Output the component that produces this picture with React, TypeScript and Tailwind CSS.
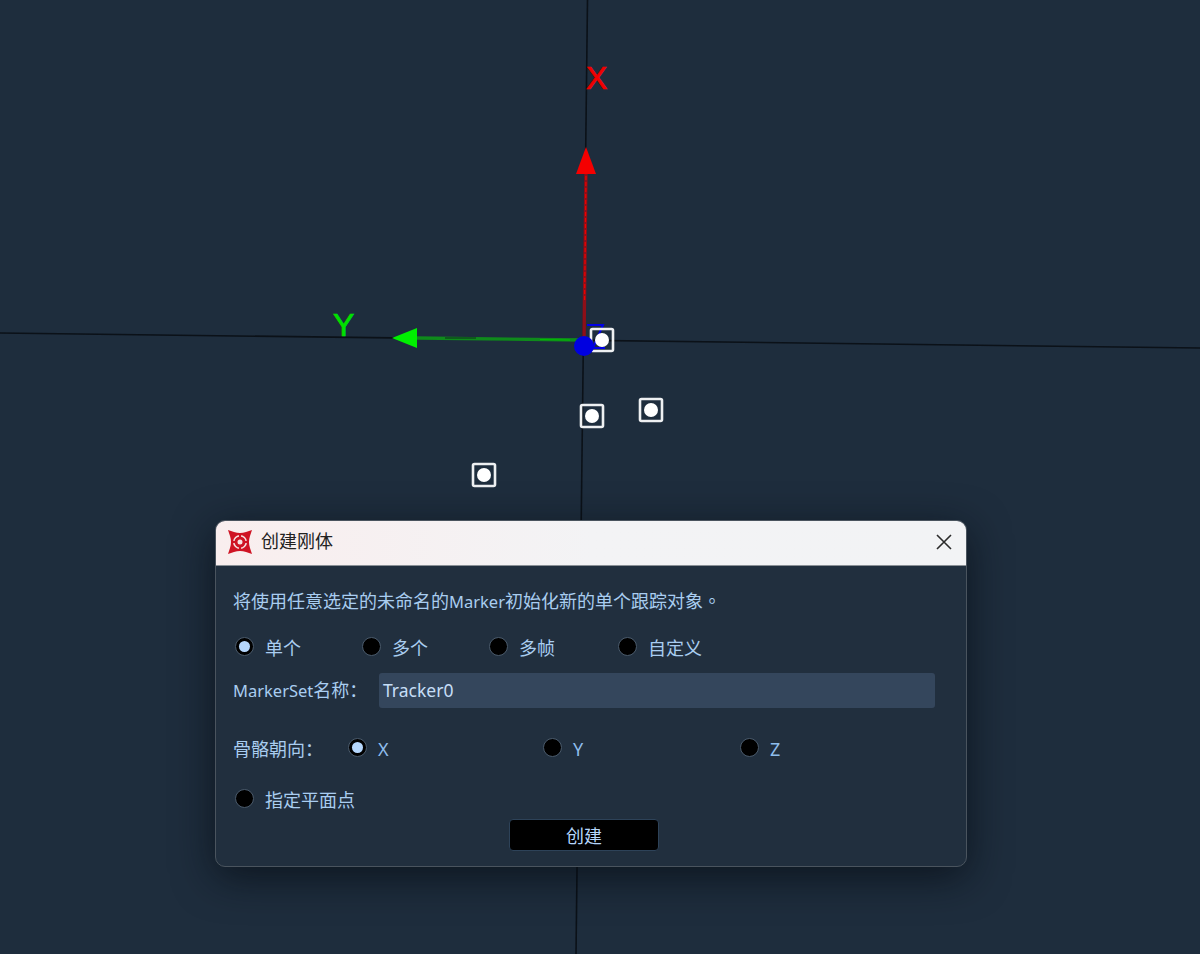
import React from 'react';

function Radio({ label, checked, labelClass }: { label: string; checked?: boolean; labelClass: string }) {
  return (
    <div className="flex items-center">
      <span className="flex h-[19px] w-[19px] shrink-0 items-center justify-center rounded-full border border-[#4a5a6b] bg-black">
        {checked && <span className="h-[11px] w-[11px] rounded-full bg-[#b5d6fb]" />}
      </span>
      <span className={`pt-[4px] text-[18px] leading-6 ${labelClass}`}>{label}</span>
    </div>
  );
}

function Marker({ x, y }: { x: number; y: number }) {
  return (
    <g>
      <rect x={x - 11} y={y - 11} width="22" height="22" rx="1.5" fill="none" stroke="#eef0f2" strokeWidth="2.6" />
      <circle cx={x} cy={y} r="7" fill="#fff" />
    </g>
  );
}

function Scene() {
  return (
    <svg className="absolute inset-0" width="1200" height="954" viewBox="0 0 1200 954">
      <line x1="587.5" y1="0" x2="576" y2="954" stroke="#0b1118" strokeWidth="1.6" />
      <line x1="0" y1="333" x2="1200" y2="348" stroke="#0b1118" strokeWidth="1.6" />
      <text x="586" y="89" fontSize="32" fill="#f00000" stroke="#f00000" strokeWidth="0.7" className="font-['Liberation_Sans',sans-serif]">X</text>
      <text x="333" y="336" fontSize="32" fill="#00e000" stroke="#00e000" strokeWidth="0.7" className="font-['Liberation_Sans',sans-serif]">Y</text>
      <line x1="584" y1="340" x2="586" y2="170" stroke="#8e0f18" strokeWidth="3.4" />
      <line x1="584.6" y1="300" x2="586" y2="175" stroke="#f00000" strokeWidth="1.2" strokeDasharray="4 2" />
      <polygon points="586,147 576,174 596,174" fill="#f50000" />
      <line x1="584" y1="340" x2="416" y2="338" stroke="#0f8a1c" strokeWidth="3.4" />
      <line x1="445" y1="338" x2="476" y2="338" stroke="#0c3d1c" strokeWidth="1.2" />
      <line x1="540" y1="339.5" x2="570" y2="340" stroke="#00c000" strokeWidth="1.2" />
      <polygon points="392,338 417,328 417,348" fill="#00f000" />
      <path d="M587 325 H603 L593 348 H605" fill="none" stroke="#0000e6" strokeWidth="2" />
      <Marker x={602} y={340} />
      <circle cx="584" cy="346" r="10" fill="#0000e0" />
      <Marker x={592} y={416} />
      <Marker x={651} y={410} />
      <Marker x={484} y={475} />
    </svg>
  );
}

function Logo() {
  return (
    <svg width="26" height="26" viewBox="0 0 26 26">
      <path d="M1 1 L7 3 Q13 5 19 3 L25 1 L23 7 Q21 13 23 19 L25 25 L19 23 Q13 21 7 23 L1 25 L3 19 Q5 13 3 7 Z" fill="#cf1424" />
      <circle cx="13" cy="13" r="7" fill="#f6e4e4" />
      <circle cx="13" cy="13" r="4" fill="#f6e4e4" stroke="#cf1424" strokeWidth="3" />
      <path d="M13 5 V8 M13 18 V21 M5 13 H8 M18 13 H21" stroke="#cf1424" strokeWidth="2" />
    </svg>
  );
}

export default function App() {
  return (
    <div className="relative h-[954px] w-[1200px] overflow-hidden bg-[#1e2d3d] font-['Noto_Sans','Noto_Sans_CJK_SC',sans-serif]">
      <Scene />

      {/* dialog */}
      <div className="absolute left-[215px] top-[520px] flex h-[347px] w-[752px] flex-col overflow-hidden rounded-[10px] border border-[#4a545e] bg-[#212f3e] shadow-[0_10px_40px_rgba(6,11,18,0.7)]">
        <div className="flex h-[45px] shrink-0 items-center justify-between border-b border-[#8a9096] bg-gradient-to-r from-[#f9eeee] via-[#f3f3f5] to-[#f2f3f5] pb-[3px] pl-[11px] pr-[13px]">
          <div className="flex items-center gap-[8px]">
            <Logo />
            <span className="text-[18px] text-[#222]">创建刚体</span>
          </div>
          <svg width="18" height="18" viewBox="0 0 18 18">
            <path d="M2 2 L16 16 M16 2 L2 16" stroke="#2b2b2b" strokeWidth="1.6" />
          </svg>
        </div>

        <div className="flex flex-1 flex-col pl-[17px] pr-[31px] pt-[22px]">
          <div className="h-[24px] text-[18px] leading-6 text-[#a9cdf0]">
            将使用任意选定的未命名的<span className="text-[16.5px]">Marker</span>初始化新的单个跟踪对象<span className="font-['Noto_Sans_CJK_TC',sans-serif]">。</span>
          </div>

          <div className="mt-[20px] flex pl-[2px]">
            <div className="w-[127px]"><Radio label="单个" checked labelClass="ml-[11px] text-[#a9cdf0]" /></div>
            <div className="w-[127px]"><Radio label="多个" labelClass="ml-[11px] text-[#a9cdf0]" /></div>
            <div className="w-[129px]"><Radio label="多帧" labelClass="ml-[11px] text-[#a9cdf0]" /></div>
            <Radio label="自定义" labelClass="ml-[11px] text-[#a9cdf0]" />
          </div>

          <div className="mt-[13px] flex items-center">
            <span className="w-[146px] text-[18px] leading-6 text-[#a9cdf0]"><span className="text-[16.5px]">MarkerSet</span>名称：</span>
            <div className="flex h-[35px] flex-1 items-center rounded-[3px] bg-[#34465c] px-[4px] text-[17.5px] text-[#c6def7]">Tracker0</div>
          </div>

          <div className="mt-[25px] flex items-center">
            <span className="w-[115px] pt-[4px] text-[18px] leading-6 text-[#a9cdf0]">骨骼朝向：</span>
            <div className="w-[195px]"><Radio label="X" checked labelClass="ml-[11px] text-[17px] text-[#8fbdec]" /></div>
            <div className="w-[197px]"><Radio label="Y" labelClass="ml-[11px] text-[17px] text-[#8fbdec]" /></div>
            <Radio label="Z" labelClass="ml-[11px] text-[17px] text-[#8fbdec]" />
          </div>

          <div className="mt-[23px] pl-[2px]">
            <Radio label="指定平面点" labelClass="ml-[11px] text-[#a9cdf0]" />
          </div>

          <button className="ml-[276px] mt-[7px] h-[32px] w-[150px] rounded-[4px] border border-[#2d4258] bg-black pt-[2px] text-[18px] text-[#b5d6fb]">创建</button>
        </div>
      </div>
    </div>
  );
}
